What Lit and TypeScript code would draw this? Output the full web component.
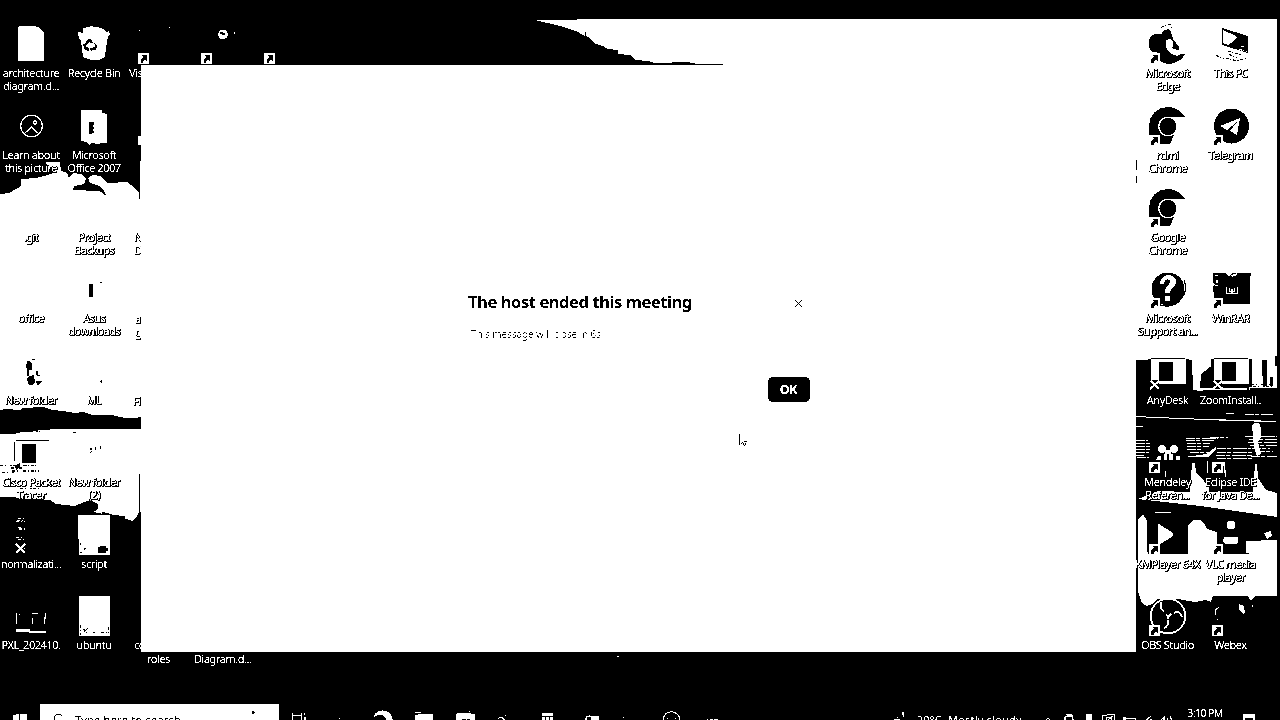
import { LitElement, html, svg, css, nothing } from "lit";
import { customElement, property } from "lit/decorators.js";

const chrome = svg`
  <path class="k" d="M20 1C9 1 1 9 1 20v9h11v9h10l5-11h-7a8 8 0 0 1-8-8c0-5 4-8 8-8h17C33 5 27 1 20 1z"/>
  <circle class="w" cx="20" cy="20.500" r="10"/>
  <circle class="k" cx="20" cy="20.500" r="8.500"/>`;

const installer = svg`
  <path class="k" d="M0 8h41v28H0z"/>
  <path class="w" d="M3 8h35v25H3z"/>
  <path class="k" d="M3 7h34v1H3zM11 11h14v19H11zM12 33h26v4H12z"/>
  <path class="k" d="M2 29h9v9H2z"/>
  <path class="x" d="M3 30l8 8M11 30l-9 8"/>`;

const icons: Record<string, unknown> = {
  none: nothing,
  doc: svg`<path class="w" d="M7 3l2-1h14l4 1 6 5v29H7z"/>`,
  bin: svg`
    <path class="w" d="M9 4l5-1 3-1 3 1 4 0 5 2 4 3 2-1 1 3-2 2-2 12-1 9-6 3h-8l-8-3-2-16-2-2-1-7 5 1z"/>
    <path class="k" d="M12 17l3-2 3 1 1 3-3 0-1-1-2 2zM9 20l4-1-1 4 3 1v3l-4-1zM16 24l5-1 0-3-2-1 2 0 2 3-1 4-4 0-1 1-2-2z"/>`,
  learn: svg`
    <circle class="lw" cx="20.500" cy="20" r="10.800"/>
    <circle class="lw" cx="24" cy="16.500" r="1.700"/>
    <path class="lw" d="M13 28l7.500-7 7.500 7"/>`,
  office: svg`
    <path class="w" d="M7 4h21v3l5 1v29h-7l-1 1-8-1-1 2-4-3-5-1z"/>
    <path class="k" d="M15 16h5v3h-1v2h1v2h-1v2h1v2h-2v1h-3z"/>`,
  asus: svg`<path class="k" d="M15 15h4v13h-4zM26 13h2v1h-2z"/>`,
  newfolder: svg`
    <path class="k" d="M16 10h3l2 3v6h-4l-2-3zM18 25l5-1 1 7-3 3-3 0-2-6zM25 30h6l-3 4h-2zM21 8h3v1h-3z"/>
    <path class="lk" d="M26 20v4l3 1M17 18v7"/>`,
  ml: svg`<path class="k" d="M27 29h1v3h-1v-1h-1v-1h1z"/>`,
  cisco: svg`
    <path class="k" d="M5 7h33v1H5zM3 9h1v19H3zM11 11h14v19H11zM4 33l5-3v4l-4 3z"/>
    <path class="w" d="M16 31h2v6h-2z"/>
    <path class="dk" d="M0 35h12M1 38h8M12 32.500h14M12 38h16"/>`,
  folder2: svg`<path class="k" d="M16 15h2v2h-2zM17 18h1v1h-1zM21 14h1v3h-1zM26 13h1v3h-1zM16 19h1v1h-1z"/>`,
  normal: svg`
    <path class="x" d="M5 29l9 9M14 29l-9 9"/>
    <path class="dw" d="M6 5.500h8M7 3.500h6M5 6.500h9M8 14h6M7 12.500h5M7 24.500h7M5 22.500h8M13.500 28v10"/>`,
  script: svg`
    <path class="w" d="M4-.500h32V40H5V24H4z"/>
    <path class="k" d="M26 31h6v2h2v3h-2v2h-8v-6h2zM6 28h1v2H6zM12 33h-2v2h1zM6 37h2v1H6z"/>`,
  pxl: svg`
    <path class="w" d="M5 17h1v11H5zM5 33h14v2h16v2H18v-1H5zM21 17h6v1h-6zM34 17h1v6h-1v5h-1v-7h1zM22 27v1h-1v-6h1zM8 18h1v1H8z"/>`,
  ubuntu: svg`
    <path class="w" d="M5 0h31v40H5z"/>
    <path class="dk" d="M6.500 29v10M9 33l5 4M14 32l-4 4M27 36.500h6M34.500 31v6M19 36.500h2"/>`,
  edge: svg`
    <path class="k" d="M1 17C2 10 8 9 14 10l1-3 5-2 3 3 2 7 6 8-1 2-7-1-2 3 5 4 11-1c-2 5-8 9-15 10-5 0-10-3-13-5v-7H4c-3-4-4-7-3-11z"/>
    <path class="w" d="M18 16l4-1 3 3 0 7 3 3 9-1v1l-8 4c-9-2-13-8-11-16z"/>
    <path class="k" d="M25 16l2 4 4 5-1 1-7-2 2-2z"/>
    <path class="dk" d="M13 3.500l6-3h5M16 7.500l8-4"/>`,
  pc: svg`
    <path class="k" d="M11 4l26 8v17l-26-8z"/>
    <path class="w" d="M12 6l11 5 3 3-6 5-3 2-5-2z"/>
    <path class="dw" d="M28 25l8 3M30 22.500h5"/>
    <path class="dk" d="M17 27l14 4M15 34l11 3 9-3M5 31.500l8 3M18 30.500l8 3"/>`,
  chrome,
  telegram: svg`
    <circle class="k" cx="20.500" cy="20" r="17.500"/>
    <path class="w" d="M9 20l20-8-3 17-7-4 7-9-10 8z"/>`,
  help: svg`
    <circle class="k" cx="20" cy="20" r="16.500"/>
    <path class="lk" d="M36 11c6 13-6 27-18 26l-6-1"/>
    <path class="w" d="M12 15c0-12 17-11 16-2 0 5-6 5-6 11h-5c-1-7 5-8 5-11 0-4-5-4-6 2z"/>
    <path class="w" d="M17 27h5v5h-5z"/>`,
  winrar: svg`
    <path class="k" d="M2 4h13l3 4 3-4h19v3h-1v28H3V24l-1-2v-5l2-1-2-3z"/>
    <path class="w" d="M4 6h3v1H4zM5 11h2v3H5zM20 6l6-2v2l-5 2zM4 16h3v1H4z"/>
    <path class="lw" d="M15.500 18v6.500h11V18M18.500 19v3.500h5V19M21 20v4"/>`,
  installer,
  mendeley: svg`
    <path class="k" d="M2 6h36v24H2z"/>
    <circle class="w" cx="14" cy="16" r="4"/><circle class="w" cx="26" cy="16" r="4"/>
    <path class="w" d="M17 17h6v4h-6zM8 27l2-4h3v4zM16 27v-6h3v6zM21 27v-6h4v6zM28 27v-4h4v4z"/>`,
  eclipse: nothing,
  km: svg`
    <path class="k" d="M0 0h40v39H0z"/>
    <path class="w" d="M10 9h1l14 9v3L11 30h-1z"/>`,
  vlc: svg`
    <path class="k" d="M16 3h10l5 18 4 5v10H12V25h4z"/>
    <circle class="w" cx="20" cy="10" r="4.500"/>
    <path class="w" d="M13 22h14v6l-2 1H14l-2-3z"/>
    <path class="lk" d="M11 38.500h27"/>`,
  obs: svg`
    <circle class="k" cx="20" cy="20" r="18"/>
    <circle class="lw2" cx="20" cy="20" r="17.300"/>
    <path class="lw2" d="M13 6c-1 5 0 8 3 9M26 17c4-3 7 0 8 4M20 24c1 4-1 7-4 8M18 19l3 1 2-2M20 20v3"/>`,
  webex: svg`
    <path class="w" d="M28 8l5 2 1 7-2 1-4-5zM4 13l4-2v1l-3 2v5H4zM6 23h1v1H6zM41 9h1v2h-1z"/>`,
};

@customElement("desk-icon")
class DeskIcon extends LitElement {
  @property() glyph = "none";
  @property({ type: Array }) lines: string[] = [];
  @property({ type: Boolean }) shortcut = false;
  static styles = css`
    :host { display: flex; flex-direction: column; align-items: center; width: 63px; height: 81.75px; }
    svg { display: block; flex: none; overflow: visible; width: 40px; height: 40px; margin-right: 1px; shape-rendering: crispEdges; }
    .k { fill: #000; }
    .w { fill: #fff; }
    .lw, .lw2, .lk, .dw, .dk, .x { fill: none; stroke: #fff; stroke-width: 1.2; }
    .lw2 { stroke-width: 1.7; }
    .x { stroke-width: 1.8; }
    .lk, .dk { stroke: #000; }
    .dw, .dk { stroke-dasharray: 3 1.500 1 2; }
    .label {
      padding: 2px 1px 0 0; font-size: 11px; line-height: 13px; letter-spacing: -0.48px;
      text-align: center; white-space: nowrap; color: #fff;
      text-shadow: 1px 1px 0 #000, 0 1px 0 #000, 1px 0 0 #000, 0 0 1px #000, 0 0 1px #000;
    }
  `;
  render() {
    return html`
      <svg viewBox="0 0 40 40">
        ${icons[this.glyph]}
        ${this.shortcut
          ? svg`<path class="w" d="M1 29h11v11H1z"/><path class="k" d="M4 31h6v6H9l-1-2-2 3v1H3v-4l3-2z"/>`
          : nothing}
      </svg>
      <div class="label">${this.lines.map((l) => html`<div>${l}</div>`)}</div>
    `;
  }
}

type Item = [string, string[], boolean?];

const columns: Item[][] = [
  [
    ["doc", ["architecture", "diagram.d..."]],
    ["learn", ["Learn about", "this picture"]],
    ["none", [".git"]],
    ["none", ["office"]],
    ["newfolder", ["New folder"]],
    ["cisco", ["Cisco Packet", "Tracer"]],
    ["normal", ["normalizati..."]],
    ["pxl", ["PXL_202410."]],
  ],
  [
    ["bin", ["Recycle Bin"]],
    ["office", ["Microsoft", "Office 2007"]],
    ["none", ["Project", "Backups"]],
    ["asus", ["Asus", "downloads"]],
    ["ml", ["ML"]],
    ["folder2", ["New folder", "(2)"]],
    ["script", ["script"]],
    ["ubuntu", ["ubuntu"]],
  ],
];

const rightColumns: Item[][] = [
  [
    ["edge", ["Microsoft", "Edge"], true],
    ["chrome", ["rdmi", "Chrome"], true],
    ["chrome", ["Google", "Chrome"], true],
    ["help", ["Microsoft", "Support an..."], true],
    ["installer", ["AnyDesk"]],
    ["mendeley", ["Mendeley", "Referen..."], true],
    ["km", ["KMPlayer 64X"], true],
    ["obs", ["OBS Studio"], true],
  ],
  [
    ["pc", ["This PC"]],
    ["telegram", ["Telegram"], true],
    ["none", []],
    ["winrar", ["WinRAR"], true],
    ["installer", ["ZoomInstall.."]],
    ["eclipse", ["Eclipse IDE", "for Java De..."], true],
    ["vlc", ["VLC media", "player"], true],
    ["webex", ["Webex"], true],
  ],
];

const pinned = [
  svg`<path class="w" d="M8 9h1v2h8V9h1v7h-1v-4H9v4H8zM20 9h1v2h-1zM20 13h2v3h-2z"/>`,
  svg`<path class="w" d="M14 14h1v1h-1z"/>`,
  svg`<path class="w" d="M7 12c3-8 17-8 19 4h-7c0-3-2-4-4-5-3-1-5 0-8 2z"/>`,
  svg`<path class="w" d="M7 8h6v1H7zM7 11l7-1h11v6H7z"/>`,
  svg`<path class="w" d="M6 10l3-1h11l-1-2h1l1 3h4v6H6z"/><path class="k" d="M12 15h4v1h-4zM17 15h3v1h-3z"/>`,
  svg`<path class="w" d="M7 16v-2l2-1h3l2 2v1h-1l-2-2H9zM14 11h1v1h-1z"/>`,
  svg`<path class="w" d="M10 9h11v3H10zM10 13h11v3H10z"/><path class="k" d="M13 13h1v3h-1zM17 13h1v3h-1z"/>`,
  svg`<path class="w" d="M11 16c0-5 4-5 8-4h6v4h-8v-3h-4v3z"/>`,
  svg`<path class="w" d="M8 13h1v1H8z"/>`,
  svg`<path class="l" d="M6 16c1-11 16-11 17 0"/><path class="w" d="M10 14h1v1h-1zM18 14h1v1h-1z"/>`,
  svg`<path class="w" d="M9 15h1v1H9zM12 15h3v1h-3zM16 15h4v1h-4z"/>`,
];

const tray = [
  svg`<path class="l" d="M4 17l3-3 3 3"/>`,
  svg`<path class="l" d="M5 17v-4l2-1h6M6 10.500h6M12.500 12v4h2"/>`,
  svg`<path class="w" d="M6 10h6v7H6z"/>`,
  svg`<path class="l" d="M2.500 17v-5.500h4l1-1h7V17M6.500 17v-3.500h5V17M8 16l5-4"/>`,
  svg`<path class="w" d="M4 13h3v1h10v3h-1v-2H7v2H4z"/>`,
  svg`<path class="l" d="M6 17l6-5M10 17l3-2"/>`,
  svg`<path class="l" d="M3 16l3-3v4M9 14l1 3M12 12l2 5"/>`,
];

@customElement("app-root")
class AppRoot extends LitElement {
  static styles = css`
    :host {
      display: block; position: relative; width: 1280px; height: 720px; overflow: hidden;
      background: #000; color: #fff; font-family: "Noto Sans", "Open Sans", sans-serif;
      filter: grayscale(1) contrast(60);
    }
    svg { display: block; shape-rendering: crispEdges; }
    .k { fill: #000; }
    .w { fill: #fff; }
    .l { fill: none; stroke: #fff; stroke-width: 1.1; }
    .dl { fill: none; stroke: #fff; stroke-width: 1.6; stroke-dasharray: 9 1 4 2 14 1; }
    .dk { fill: none; stroke: #000; stroke-dasharray: 3 2 1 4 2 1; }
    .wall { position: absolute; inset: 0; width: 1280px; height: 720px; }
    .screen { position: relative; display: flex; flex-direction: column; height: 720px; }
    .desk { display: flex; justify-content: space-between; height: 680px; padding: 24px 17.5px 0 0; box-sizing: border-box; }
    .side { display: flex; }
    .col { display: flex; flex-direction: column; width: 63px; flex: none; }
    .win { position: absolute; left: 141px; top: 65px; width: 995px; height: 587px; box-sizing: border-box; background: #fff; color: #000; padding: 227px 326px 0 327px; }
    .head { display: flex; justify-content: space-between; align-items: center; height: 20px; padding-right: 7px; }
    .head svg { margin-top: 3px; }
    h1 { margin: 0; font-size: 16.5px; line-height: 20px; font-weight: 700; white-space: nowrap; letter-spacing: -0.42px; }
    .msg { margin: 13px 0 0 3px; font-size: 10px; line-height: 18px; letter-spacing: -0.1px; color: #505050; white-space: nowrap; }
    .foot { display: flex; justify-content: flex-end; padding-top: 34px; }
    button { width: 42px; height: 25px; padding: 0 1px 0 0; border: 0; border-radius: 5px; background: #000; color: #fff; font: 700 12.5px/26px "Noto Sans", sans-serif; letter-spacing: -0.3px; }
    .ptr { position: absolute; left: 739px; top: 433px; }
    .peek { position: absolute; font-size: 11px; line-height: 13px; letter-spacing: -0.48px; white-space: nowrap; text-shadow: 1px 1px 0 #000, 0 1px 0 #000, 1px 0 0 #000, 0 0 1px #000; }
    .bar { position: absolute; left: 0; top: 704px; width: 1280px; height: 32px; display: flex; font-size: 11px; line-height: 32px; }
    .start { width: 40px; }
    .search { display: flex; width: 239px; background: #fff; color: #000; }
    .search span { width: 158px; padding-left: 13px; letter-spacing: 0.25px; white-space: nowrap; }
    .pins { display: flex; margin-left: -2px; }
    .pins svg { width: 41.4px; height: 32px; }
    .rest { display: flex; margin-left: auto; padding-right: 24px; }
    .weather { width: 124px; white-space: nowrap; letter-spacing: 0.2px; }
    .clock { width: 64px; box-sizing: border-box; padding: 2px 10px 0 0; line-height: 14px; font-size: 10.5px; letter-spacing: -0.55px; text-align: center; white-space: nowrap; }
  `;

  column(items: Item[]) {
    return html`<div class="col">
      ${items.map(([g, l, s]) => html`<desk-icon .glyph=${g} .lines=${l} .shortcut=${!!s}></desk-icon>`)}
    </div>`;
  }

  wallpaper() {
    return html`<svg class="wall" viewBox="0 0 1280 720">
      <path class="w" d="M577 19H1277V360H1136V65H723V64H701L698 64L687 62H672L671 63H654L648 61L635 60L630 55L618 54V50L608 49L603 46L596 44L592 41L588 37L583 35L578 32L570 29L560 26L552 24L543 22L535 20H577z"/>
      <path class="k" d="M585 32h1v4h-1z"/>
      <path class="w" d="M1192 360h85V390h-72l-5 1-7-1z"/>
      <path class="k" d="M1136 160h1v10h-1zM1136 176h1v7h-1zM1136 360h15l1 30h-16zM1187 361h3v30h-3zM1201 374l13-10v24h-14zM1247 372h2v18h-2z"/>
      <path class="k" d="M1262 360h5v26h-4v-10h-1zM1275 356h2v10h-2zM1270 377h3v9h-3zM1250 388h27v4h-27z"/>
      <path class="dk" d="M1251 384.500h22M1253 386.500h20"/>
      <path class="w" d="M1136 416l20 1 50 2 40 1 30 1v1l-45-1-25-1-50-2-20-1zM1136 426h7v1h-7zM1252 425l3-2h4l2 5v9l-3 5 3 12-4 2-3-8-1-11z"/>
      <path class="dl" d="M1136 440.500h12M1136 443.500h14M1136 446.500h14M1136 449.500h14M1136 452.500h13M1136 455.500h8M1137 457.500h12M1186 438.500h32M1186 440.500h28M1187 443.500h23M1187 446.500h22M1187 449.500h16M1190 452.500h20M1188 456.500h14M1217 448.500h34M1217 452.500h35M1216 455.500h36M1217 458.500h35M1245 436.500h32M1249 439.500h28M1248 442.500h29M1250 445.500h27M1252 448.500h18M1256 451.500h17M1251 456.500h26M1226 413.500h8M1245 414.500h28M1210 437.500h18"/>
      <path class="w" d="M1186 457l20-3 10-7v3l-8 7zM1207 461h1v12h-1zM1223 462h2l1 15h-1zM1165 471h1v6h-1z"/>
      <path class="w" d="M1138 499L1158 491L1190 492L1192 463H1195L1196 473L1202 478L1209 488V492H1253L1255 464H1257L1258 478L1266 490L1277 493V517L1250 513L1200 506z"/>
      <path class="w" d="M1138 519L1143 514L1147 521V552H1188V525L1193 520H1201L1205 525L1207 529L1217 532V554H1246V541L1277 540V596H1255L1251 601L1248 596H1213L1211 602L1206 600L1195 602L1178 599H1158L1152 604L1147 606L1142 603L1138 592z"/>
      <path class="w" d="M1155 512h16v1h-16zM1264 533l7-2 1 5-5 3z"/>
      <path class="w" d="M0 194L9 193L18 188L21 185V179L36 178L44 176L54 173L55 169L46 164V162H60L61 171L67 173L69 178L73 173L81 174L86 179L84 184L74 186L73 190L98 191L101 192L105 195H106L103 189L99 186L90 183L88 178L93 175L100 176L105 181L108 183L127 182L134 187L139 193V199H141V512H139L136 518L132 521L120 517L110 514H104L98 513L80 509L70 507H56L45 500L16 498L15 497H0z"/>
      <path class="k" d="M0 410L6 409L20 410L23 408L43 407L53 410L63 411L75 413L83 412L92 415H112L125 418L134 418L141 417V429H60L40 430L30 432H22L14 434H0z"/>
      <path class="k" d="M16 498L50 500L56 504L75 506L82 503L90 500L98 504V509L92 513L16 510zM102 512l6 1 5 2 12 1v5h-20zM139 474h1v47h-1z"/>
      <path class="dk" d="M0 465.500h35M2 472.500h12M20 488.500h22M26 431.500h14M73 432.500h5"/>
      <path class="w" d="M139 30h1v1h-1zM138 136h3v9h-3zM140 161h1v38h-1zM169 27h1v1h-1zM617 656h2v1h-2z"/>
      <path class="w" d="M138 53h11v11h-11zM201 53h11v11h-11zM264 53h11v11h-11z"/>
      <path class="k" d="M141 55h6v6h-1l-1-2-2 3v1h-2v-4l2-2zM204 55h6v6h-1l-1-2-2 3v1h-2v-4l2-2zM267 55h6v6h-1l-1-2-2 3v1h-2v-4l2-2z"/>
      <circle class="w" cx="223" cy="34.500" r="4.800"/>
      <path class="k" d="M220 32h3v1h2v2h-3v-1h-2z"/><path class="w" d="M234 32h1v2h-1z"/>
      <path class="k" d="M1277 0h3v720h-3z"/>
    </svg>`;
  }

  render() {
    const peeks: [number, number, string][] = [
      [129, 66, "Vis"], [134, 230, "N"], [134, 243, "D"], [135, 312, "a"], [135, 325, "g"],
      [133, 394, "Fi"], [134, 638, "co"], [147, 652, "roles"], [194, 652, "Diagram.d..."],
    ];
    return html`
      ${this.wallpaper()}
      <div class="screen">
        <div class="desk">
          <div class="side">${columns.map((c) => this.column(c))}</div>
          <div class="side">${rightColumns.map((c) => this.column(c))}</div>
        </div>
      </div>
      ${peeks.map(([x, y, t]) => html`<span class="peek" style="left:${x}px;top:${y}px">${t}</span>`)}
      <section class="win">
        <div class="head">
          <h1>The host ended this meeting</h1>
          <svg width="9" height="9" viewBox="0 0 9 9"><path d="M1 1l7 7M8 1l-7 7" stroke="#000" stroke-width="1.2" fill="none"/></svg>
        </div>
        <p class="msg">This message will close in 6s</p>
        <div class="foot"><button>OK</button></div>
      </section>
      <svg class="ptr" width="10" height="14" viewBox="0 0 10 14">
        <path class="k" d="M0 1h1v11H0zM2 10h1v1H2zM3 9h1v1H3zM4 10h1v2H4zM5 8h3v1H5zM6 10h1v2H6zM5 12h1v1H5z"/>
      </svg>
      <footer class="bar">
        <svg class="start" height="32" viewBox="0 0 40 32"><path class="w" d="M13 11l6-1v6h-6zM20 10h7v6h-7z"/></svg>
        <div class="search">
          <svg width="22" height="32" viewBox="0 0 22 32"><circle cx="18.500" cy="14.500" r="4.200" fill="none" stroke="#000"/></svg>
          <span>Type here to search</span>
          <svg width="30" height="32" viewBox="0 0 30 32"><path class="k" d="M19 7h2v1h1v1h-1v1h-2z"/></svg>
        </div>
        <div class="pins">${pinned.map((p) => html`<svg viewBox="-7 0 41.4 32">${p}</svg>`)}</div>
        <div class="rest">
          <svg width="26" height="32" viewBox="0 0 26 32"><path class="w" d="M11 8h2v5h-1v-2h-1zM3 15h6v1H3zM6 13h1v1H6z"/></svg>
          <div class="weather">20°C&nbsp; Mostly cloudy</div>
          ${tray.map((t) => html`<svg width="19.600" height="32" viewBox="0 0 19.600 32">${t}</svg>`)}
          <div class="clock">3:10 PM</div>
          <svg width="14" height="32" viewBox="0 0 14 32"><path class="w" d="M1 10h12v7H1z"/><path class="k" d="M3 14h8v3H3z"/></svg>
        </div>
      </footer>
    `;
  }
}
